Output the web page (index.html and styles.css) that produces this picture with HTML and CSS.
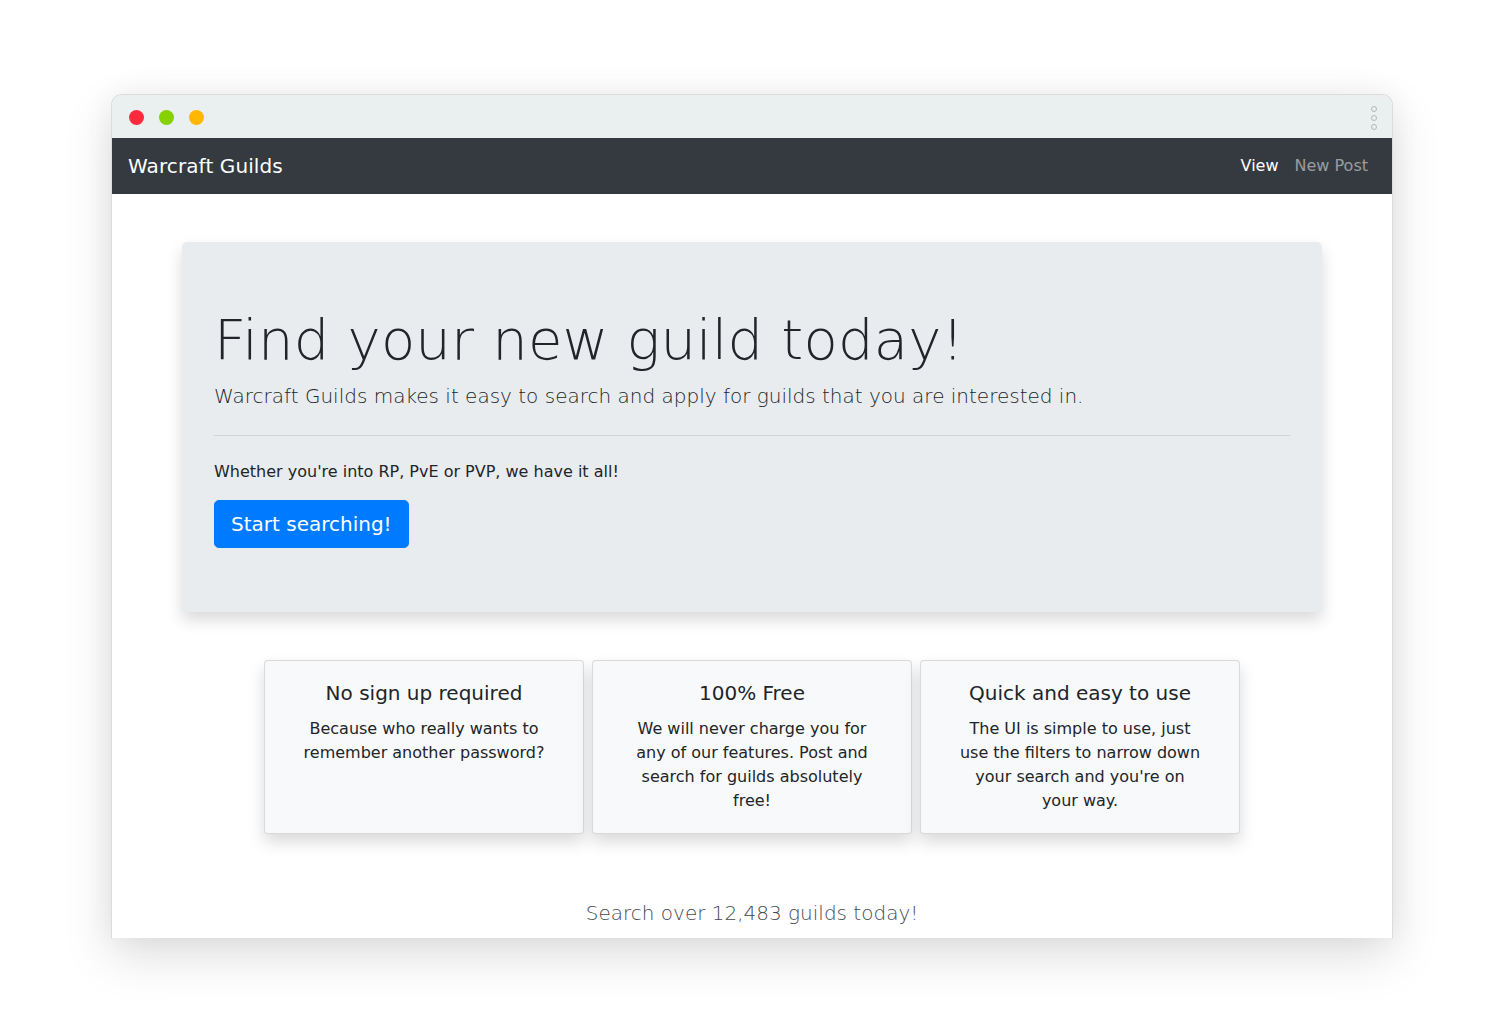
FILE: index.html
```html
<!DOCTYPE html>
<html lang="en">
<head>
<meta charset="utf-8">
<title>Warcraft Guilds</title>
<link rel="stylesheet" href="styles.css">
</head>
<body>
<div class="stage">
  <div class="window">
    <div class="titlebar">
      <span class="dot dot-red"></span>
      <span class="dot dot-green"></span>
      <span class="dot dot-yellow"></span>
      <span class="kebab"><i></i><i></i><i></i></span>
    </div>
    <nav class="navbar">
      <a class="brand" href="#">Warcraft Guilds</a>
      <div class="nav-links">
        <a class="nav-link active" href="#">View</a>
        <a class="nav-link" href="#">New Post</a>
      </div>
    </nav>
    <main class="content">
      <section class="jumbotron">
        <h1 class="display">Find your new guild today!</h1>
        <p class="lead">Warcraft Guilds makes it easy to search and apply for guilds that you are interested in.</p>
        <hr class="divider">
        <p class="tagline">Whether you're into RP, PvE or PVP, we have it all!</p>
        <a class="btn-primary" href="#">Start searching!</a>
      </section>
      <section class="cards">
        <div class="card">
          <h5 class="card-title">No sign up required</h5>
          <p class="card-text">Because who really wants to remember another password?</p>
        </div>
        <div class="card">
          <h5 class="card-title">100% Free</h5>
          <p class="card-text">We will never charge you for any of our features. Post and search for guilds absolutely free!</p>
        </div>
        <div class="card">
          <h5 class="card-title">Quick and easy to use</h5>
          <p class="card-text">The UI is simple to use, just use the filters to narrow down your search and you're on your way.</p>
        </div>
      </section>
      <p class="count">Search over 12,483 guilds today!</p>
    </main>
  </div>
</div>
</body>
</html>
```
FILE: styles.css
```css
* { box-sizing: border-box; }
html, body {
  margin: 0;
  padding: 0;
  background: #ffffff;
}
body {
  font-family: "DejaVu Sans", "Liberation Sans", sans-serif;
  color: #212529;
  font-size: 16px;
  line-height: 1.5;
}
.stage {
  display: flex;
  justify-content: center;
  padding-top: 94px;
  height: 1018px;
  overflow: hidden;
}
.window {
  width: 1282px;
  height: 844px;
  border: 1px solid #dcdcdc;
  border-bottom: 0;
  border-radius: 11px 11px 0 0;
  overflow: hidden;
  background: #fff;
  box-shadow: 0 18px 50px rgba(0, 0, 0, 0.13), 0 0 30px rgba(0, 0, 0, 0.05);
  display: flex;
  flex-direction: column;
}
.titlebar {
  height: 43px;
  flex: none;
  background: #eaeff0;
  display: flex;
  align-items: center;
  padding: 1px 15px 0 17px;
  gap: 15px;
}
.dot {
  width: 15px;
  height: 15px;
  border-radius: 50%;
  display: block;
}
.dot-red { background: #ff2a3b; }
.dot-green { background: #86d100; }
.dot-yellow { background: #ffb700; }
.kebab {
  margin-left: auto;
  display: flex;
  flex-direction: column;
  gap: 3px;
  margin-top: 1px;
}
.kebab i {
  display: block;
  width: 6px;
  height: 6px;
  border: 1px solid #b4b8ba;
  border-radius: 50%;
}
.navbar {
  height: 56px;
  flex: none;
  background: #343a40;
  display: flex;
  align-items: center;
  justify-content: space-between;
  padding: 0 16px;
}
.brand {
  color: #fff;
  text-decoration: none;
  font-size: 20px;
  line-height: 30px;
  letter-spacing: 0.1px;
}
.nav-links {
  display: flex;
}
.nav-link {
  color: rgba(255, 255, 255, 0.5);
  text-decoration: none;
  padding: 8px 8px;
  font-size: 16px;
}
.nav-link.active { color: #fff; }
.content {
  flex: 1;
  display: flex;
  flex-direction: column;
  align-items: center;
  padding-top: 48px;
}
.jumbotron {
  width: 1140px;
  background: #e9ecef;
  border-radius: 4.8px;
  padding: 64px 32px;
  box-shadow: 0 8px 16px rgba(0, 0, 0, 0.15);
}
.display {
  margin: 0 0 8px;
  font-size: 56px;
  font-weight: 300;
  line-height: 1.2;
  color: #212529;
  letter-spacing: 0.2px;
}
.lead {
  margin: 0;
  font-size: 20px;
  font-weight: 300;
  line-height: 30px;
}
.divider {
  margin: 24px 0;
  border: 0;
  border-top: 1px solid rgba(0, 0, 0, 0.1);
}
.tagline {
  margin: 0 0 16px;
}
.btn-primary {
  display: inline-block;
  background: #007bff;
  color: #fff;
  text-decoration: none;
  font-size: 20px;
  line-height: 30px;
  padding: 8px 16px;
  border: 1px solid #007bff;
  border-radius: 4.8px;
}
.cards {
  display: flex;
  gap: 8px;
  margin-top: 48px;
}
.card {
  width: 320px;
  background: #f8f9fa;
  border: 1px solid rgba(0, 0, 0, 0.125);
  border-radius: 4px;
  padding: 20px 35px;
  text-align: center;
  box-shadow: 0 8px 16px rgba(0, 0, 0, 0.15);
}
.card-title {
  margin: 0 0 12px -15px;
  width: calc(100% + 30px);
  font-size: 20px;
  font-weight: 500;
  line-height: 1.2;
}
.card-text {
  margin: 0;
}
.count {
  margin: 64px 0 0;
  font-size: 20px;
  font-weight: 300;
  line-height: 30px;
  color: #45494d;
}
```
